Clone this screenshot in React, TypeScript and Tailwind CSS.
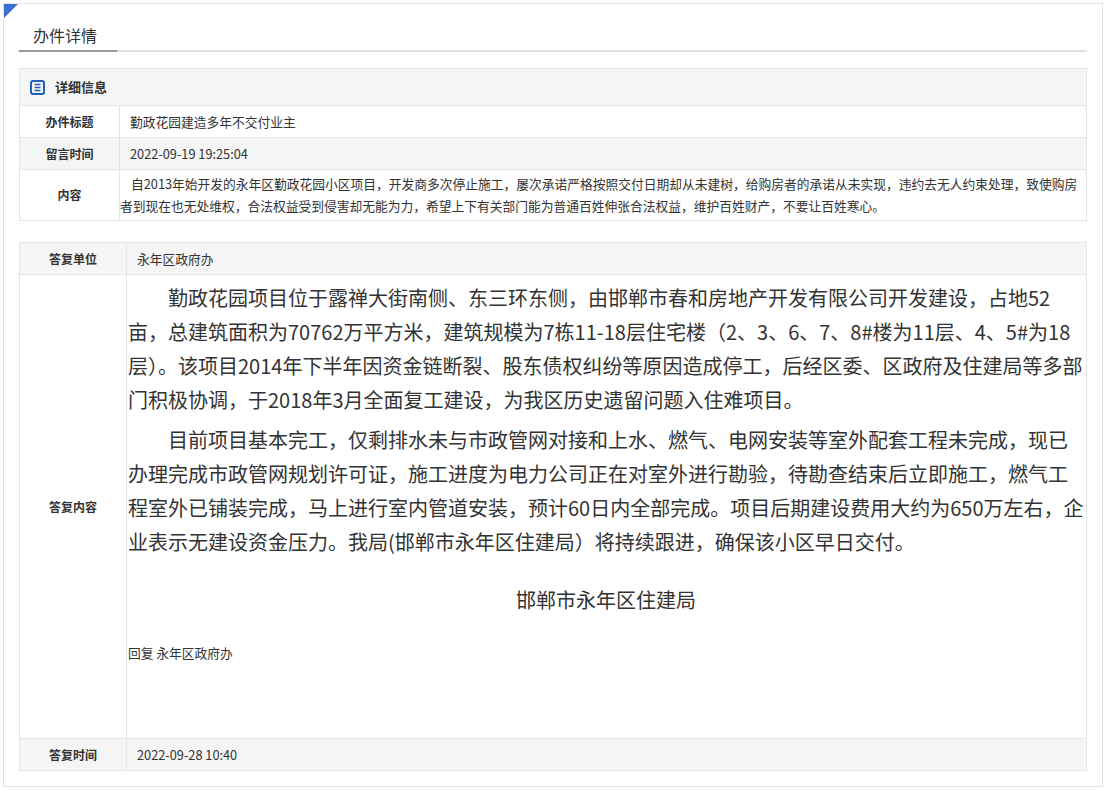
const font = { fontFamily: '"Microsoft YaHei","Noto Sans CJK SC",sans-serif' }

function Label({ children, className = '' }: { children: React.ReactNode; className?: string }) {
  return (
    <div className={`flex shrink-0 items-center justify-center border-r border-[#e5e5e5] bg-[#f5f5f5] text-[12px] font-bold text-[#333] ${className}`}>
      {children}
    </div>
  )
}

export default function App() {
  return (
    <div style={font} className="h-[790px] bg-white p-[3px]">
      <div className="relative h-[784px] w-[1100px] border border-[#e3e3e3] bg-white px-[15px]">
        <div className="absolute left-0 top-0 h-0 w-0 border-r-[14px] border-t-[14px] border-r-transparent border-t-[#3d6fd1]" />
        <div className="mt-[19px] flex border-b-2 border-[#e0e0e0]">
          <div className="-mb-[2px] w-[98px] border-b-2 border-[#999] pb-[3px] pl-[14px] text-[16px] text-[#333]">办件详情</div>
        </div>

        <div className="mt-[16px] w-[1068px] border border-[#e5e5e5] text-[#333]">
          <div className="flex h-[37px] items-center gap-[10px] border-b border-[#e5e5e5] bg-[#f5f5f5] pl-[10px] text-[13px] font-bold">
            <svg width="15" height="15" viewBox="0 0 15 15">
              <rect x="1" y="1" width="13" height="13" rx="2" fill="none" stroke="#1f5fbf" strokeWidth="2" />
              <path d="M4.5 4.5h6M4.5 7.5h6M4.5 10.5h6" stroke="#1f5fbf" strokeWidth="1.3" />
            </svg>
            详细信息
          </div>
          <div className="flex h-[32px] border-b border-[#e5e5e5]">
            <Label className="w-[100px] bg-white">办件标题</Label>
            <div className="flex items-center pl-[10px] text-[12.75px]">勤政花园建造多年不交付业主</div>
          </div>
          <div className="flex h-[32px] border-b border-[#e5e5e5] bg-[#f5f5f5]">
            <Label className="w-[100px]">留言时间</Label>
            <div className="flex items-center pl-[10px] text-[12.75px]">2022-09-19 19:25:04</div>
          </div>
          <div className="flex h-[50px]">
            <Label className="w-[100px] bg-white">内容</Label>
            <div className="flex-1 py-[3px] pr-[2px] text-[12.75px] leading-[22px] [text-indent:11px]">
              自2013年始开发的永年区勤政花园小区项目，开发商多次停止施工，屡次承诺严格按照交付日期却从未建树，给购房者的承诺从未实现，违约去无人约束处理，致使购房者到现在也无处维权，合法权益受到侵害却无能为力，希望上下有关部门能为普通百姓伸张合法权益，维护百姓财产，不要让百姓寒心。
            </div>
          </div>
        </div>

        <div className="mt-[21px] w-[1068px] border border-[#e5e5e5] text-[#333]">
          <div className="flex h-[32px] border-b border-[#e5e5e5] bg-[#f5f5f5]">
            <Label className="w-[107px]">答复单位</Label>
            <div className="flex items-center pl-[10px] text-[12.75px]">永年区政府办</div>
          </div>
          <div className="flex h-[464px] border-b border-[#e5e5e5]">
            <Label className="w-[107px] bg-white">答复内容</Label>
            <div className="flex-1 pl-[1px] pr-[2px] pt-[6px]">
              <p className="text-[20px] leading-[34px] [text-indent:40px]">
                勤政花园项目位于露禅大街南侧、东三环东侧，由邯郸市春和房地产开发有限公司开发建设，占地52亩，总建筑面积为70762万平方米，建筑规模为7栋11-18层住宅楼（2、3、6、7、8#楼为11层、4、5#为18层）。该项目2014年下半年因资金链断裂、股东债权纠纷等原因造成停工，后经区委、区政府及住建局等多部门积极协调，于2018年3月全面复工建设，为我区历史遗留问题入住难项目。
              </p>
              <p className="mt-[6px] text-[20px] leading-[34px] [text-indent:40px]">
                目前项目基本完工，仅剩排水未与市政管网对接和上水、燃气、电网安装等室外配套工程未完成，现已办理完成市政管网规划许可证，施工进度为电力公司正在对室外进行勘验，待勘查结束后立即施工，燃气工程室外已铺装完成，马上进行室内管道安装，预计60日内全部完成。项目后期建设费用大约为650万左右，企业表示无建设资金压力。我局(邯郸市永年区住建局）将持续跟进，确保该小区早日交付。
              </p>
              <p className="mt-[24px] text-center text-[20px] leading-[34px]">邯郸市永年区住建局</p>
              <p className="mt-[26px] text-[12.75px]">回复 永年区政府办</p>
            </div>
          </div>
          <div className="flex h-[31px] bg-[#f5f5f5]">
            <Label className="w-[107px]">答复时间</Label>
            <div className="flex items-center pl-[10px] text-[12.75px]">2022-09-28 10:40</div>
          </div>
        </div>
      </div>
    </div>
  )
}
